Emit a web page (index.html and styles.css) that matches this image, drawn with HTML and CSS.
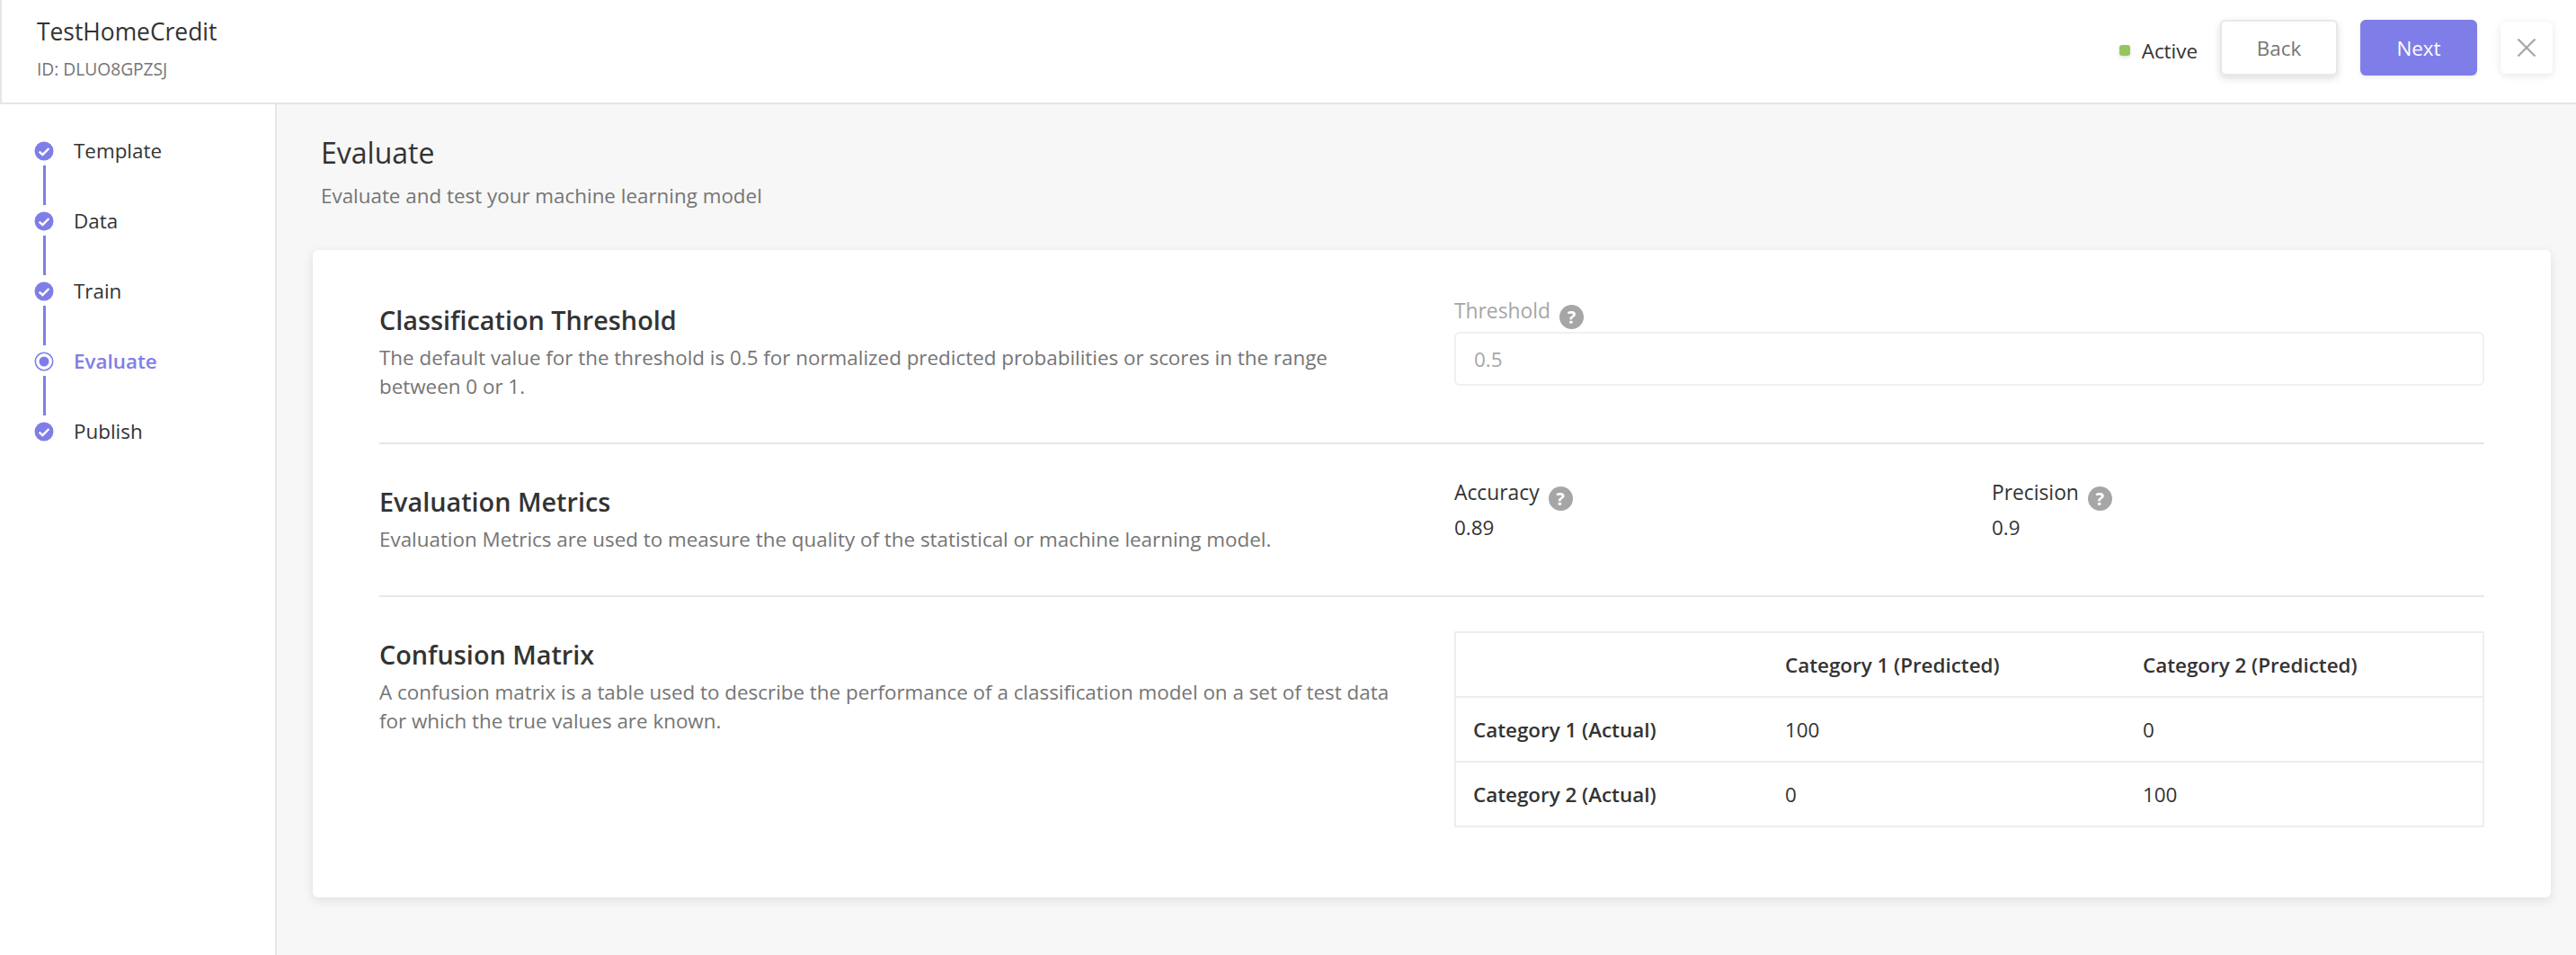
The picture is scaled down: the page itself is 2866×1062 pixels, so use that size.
FILE: index.html
```html
<!DOCTYPE html>
<html lang="en">
<head>
<meta charset="utf-8">
<title>TestHomeCredit</title>
<link rel="stylesheet" href="styles.css">
</head>
<body>
<div class="page">
  <header class="topbar">
    <div class="identity">
      <div class="app-name">TestHomeCredit</div>
      <div class="app-id">ID: DLUO8GPZSJ</div>
    </div>
    <div class="actions">
      <div class="status"><span class="status-dot"></span><span class="status-text">Active</span></div>
      <button class="btn btn-back">Back</button>
      <button class="btn btn-next">Next</button>
      <button class="btn-close" aria-label="Close">
        <svg width="22" height="22" viewBox="0 0 22 22"><path d="M1.5 1.5 L20.5 20.5 M20.5 1.5 L1.5 20.5" stroke="#a6a6a6" stroke-width="2.2" fill="none"/></svg>
      </button>
    </div>
  </header>
  <div class="body">
    <nav class="stepper">
      <div class="step">
        <svg class="step-icon" viewBox="0 0 22 22"><circle cx="11" cy="11" r="10.5" fill="#7f7ee8"/><path d="M5.6 11.6 L9.4 15 L16.4 8" stroke="#fff" stroke-width="2.4" fill="none"/></svg>
        <span class="step-label">Template</span>
      </div>
      <div class="step-line"></div>
      <div class="step">
        <svg class="step-icon" viewBox="0 0 22 22"><circle cx="11" cy="11" r="10.5" fill="#7f7ee8"/><path d="M5.6 11.6 L9.4 15 L16.4 8" stroke="#fff" stroke-width="2.4" fill="none"/></svg>
        <span class="step-label">Data</span>
      </div>
      <div class="step-line"></div>
      <div class="step">
        <svg class="step-icon" viewBox="0 0 22 22"><circle cx="11" cy="11" r="10.5" fill="#7f7ee8"/><path d="M5.6 11.6 L9.4 15 L16.4 8" stroke="#fff" stroke-width="2.4" fill="none"/></svg>
        <span class="step-label">Train</span>
      </div>
      <div class="step-line"></div>
      <div class="step">
        <svg class="step-icon" viewBox="0 0 22 22"><circle cx="11" cy="11" r="9.7" fill="#fff" stroke="#7f7ee8" stroke-width="1.6"/><circle cx="11" cy="11" r="5.5" fill="#7f7ee8"/></svg>
        <span class="step-label step-label-active">Evaluate</span>
      </div>
      <div class="step-line"></div>
      <div class="step">
        <svg class="step-icon" viewBox="0 0 22 22"><circle cx="11" cy="11" r="10.5" fill="#7f7ee8"/><path d="M5.6 11.6 L9.4 15 L16.4 8" stroke="#fff" stroke-width="2.4" fill="none"/></svg>
        <span class="step-label">Publish</span>
      </div>
    </nav>
    <main class="content">
      <h1 class="page-title">Evaluate</h1>
      <p class="page-sub">Evaluate and test your machine learning model</p>
      <section class="card">
        <div class="row row-threshold">
          <div class="row-text">
            <h2 class="row-title">Classification Threshold</h2>
            <p class="row-desc">The default value for the threshold is 0.5 for normalized predicted probabilities or scores in the range between 0 or 1.</p>
          </div>
          <div class="row-side">
            <div class="label label-muted">Threshold<span class="help">?</span></div>
            <div class="input">0.5</div>
          </div>
        </div>
        <div class="row row-metrics">
          <div class="row-text">
            <h2 class="row-title">Evaluation Metrics</h2>
            <p class="row-desc">Evaluation Metrics are used to measure the quality of the statistical or machine learning model.</p>
          </div>
          <div class="row-side metrics">
            <div class="metric">
              <div class="label">Accuracy<span class="help">?</span></div>
              <div class="metric-value">0.89</div>
            </div>
            <div class="metric">
              <div class="label">Precision<span class="help">?</span></div>
              <div class="metric-value">0.9</div>
            </div>
          </div>
        </div>
        <div class="row row-matrix">
          <div class="row-text">
            <h2 class="row-title">Confusion Matrix</h2>
            <p class="row-desc">A confusion matrix is a table used to describe the performance of a classification model on a set of test data for which the true values are known.</p>
          </div>
          <div class="row-side">
            <table class="matrix">
              <tr><th class="col-a"></th><th class="col-b">Category 1 (Predicted)</th><th>Category 2 (Predicted)</th></tr>
              <tr><th>Category 1 (Actual)</th><td>100</td><td>0</td></tr>
              <tr><th>Category 2 (Actual)</th><td>0</td><td>100</td></tr>
            </table>
          </div>
        </div>
      </section>
    </main>
  </div>
</div>
</body>
</html>
```
FILE: styles.css
```css
* { box-sizing: border-box; }
html, body { margin: 0; height: 100%; }
body { font-family: "Open Sans", "Liberation Sans", sans-serif; color: #333; background: #f7f7f7; overflow: hidden; }
.page { height: 1062px; display: flex; flex-direction: column; }

.topbar { height: 116px; flex: none; display: flex; justify-content: space-between; align-items: flex-start; background: #fff; border-bottom: 2px solid #e6e6e6; border-left: 2px solid #e6e6e6; padding: 0 26px 0 39px; }
.identity { padding-top: 18px; }
.app-name { font-size: 26.4px; line-height: 34px; font-weight: 500; color: #333; }
.app-id { font-size: 19.2px; line-height: 22px; margin-top: 14px; color: #757575; }

.actions { display: flex; align-items: flex-start; padding-top: 22px; }
.status { display: flex; align-items: center; height: 40px; margin-top: 14px; margin-right: 25px; }
.status-dot { width: 12px; height: 12px; border-radius: 3px; background: #98c45d; margin-right: 13px; box-shadow: 0 2px 4px rgba(0,0,0,.12); }
.status-text { font-size: 22.4px; color: #333; }
.btn { height: 62px; border-radius: 6px; font: 400 22.4px "Open Sans", sans-serif; }
.btn-back { width: 131px; background: #fff; border: 2px solid #e8e8e8; color: #757575; box-shadow: 0 3px 8px rgba(0,0,0,.14); margin-right: 25px; }
.btn-next { width: 130px; background: #7f7ee8; border: 0; color: #fff; margin-right: 26px; box-shadow: 0 2px 5px rgba(0,0,0,.08); }
.btn-close { width: 58px; height: 58px; margin-top: 2px; display: flex; align-items: center; justify-content: center; background: #fff; border: 0; border-radius: 6px; box-shadow: 0 2px 8px rgba(0,0,0,.1); padding: 0; }

.body { flex: 1; display: flex; min-height: 0; }
.stepper { width: 308px; flex: none; background: #fff; border-right: 2px solid #e6e6e6; padding: 41px 0 0 38px; }
.step { display: flex; align-items: center; height: 22px; }
.step-icon { width: 22px; height: 22px; flex: none; }
.step-label { font-size: 22.4px; line-height: 20px; margin-left: 22px; color: #333; white-space: nowrap; }
.step-label-active { color: #7f7ee8; font-weight: 600; }
.step-line { width: 3px; height: 44px; background: #7f7ee8; margin: 5px 0 7px 10px; }

.content { flex: 1; min-width: 0; padding: 31px 28px 0 40px; }
.page-title { margin: 0 0 0 9px; font-size: 32px; line-height: 46px; font-weight: 400; color: #333; }
.page-sub { margin: 10px 0 0 9px; font-size: 22.4px; line-height: 30px; color: #757575; }
.card { margin-top: 45px; height: 720px; background: #fff; border-radius: 6px; box-shadow: 0 3px 12px rgba(0,0,0,.1); padding: 0 74px; }

.row { display: flex; }
.row-threshold { height: 216px; padding-top: 58px; border-bottom: 2px solid #e6e6e6; }
.row-metrics { height: 170px; padding-top: 44px; border-bottom: 2px solid #e6e6e6; }
.row-matrix { padding-top: 44px; }
.row-text { width: 1196px; flex: none; padding-right: 60px; }
.row-side { flex: 1; min-width: 0; margin-top: -5px; }
.row-matrix .row-side { margin-top: -6px; }
.row-title { margin: 0; font-size: 28.8px; line-height: 40px; font-weight: 600; color: #333; }
.row-desc { margin: 6px 0 0; font-size: 22.4px; line-height: 32px; color: #757575; }

.label { font-size: 22.8px; line-height: 30px; font-weight: 500; color: #333; display: flex; align-items: center; height: 30px; }
.label-muted { color: #a6a6a6; }
.help { width: 27px; height: 27px; margin: 8px 0 -4px 10px; flex: none; display: flex; align-items: center; justify-content: center; border-radius: 50%; background: #a6a6a6; color: #fff; font-size: 20px; line-height: 27px; font-weight: 700; }
.input { height: 60px; margin-top: 8px; padding-left: 20px; display: flex; align-items: center; border: 2px solid #f0f0f0; border-radius: 6px; font-size: 22.4px; color: #a6a6a6; }
.metrics { display: flex; }
.metric { width: 598px; flex: none; }
.metric-value { font-size: 22.4px; line-height: 30px; margin-top: 9px; color: #333; }

.matrix { width: 100%; border-collapse: collapse; table-layout: fixed; border: 2px solid #eee; font-size: 22.4px; }
.matrix tr { height: 72px; border-bottom: 2px solid #eee; }
.matrix th { font-weight: 600; text-align: left; padding: 0 0 0 19px; color: #333; }
.matrix td { padding: 0 0 0 19px; color: #333; }
.col-a { width: 348px; }
.col-b { width: 398px; }
```
